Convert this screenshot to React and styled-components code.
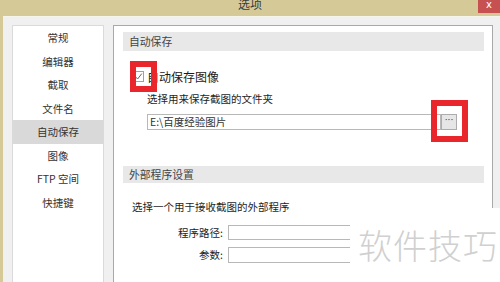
import React from "react";
import styled, { createGlobalStyle } from "styled-components";

const Global = createGlobalStyle`
  html, body { margin: 0; padding: 0; background: #f0f0f0; }
  body { font-family: "Noto Sans CJK SC", "Noto Sans", sans-serif; }
  * { box-sizing: border-box; }
`;

const Window = styled.div`
  position: relative;
  width: 500px;
  height: 282px;
  overflow: hidden;
  background: #f0f0f0;
  border-left: 3px solid #d6c998;
  display: flex;
  flex-direction: column;
  font-size: 10.5px;
  color: #222;
`;

const TitleBar = styled.div`
  height: 17px;
  margin-left: -3px;
  background: #d6c998;
  border-bottom: 1px solid #f7f4ea;
  display: flex;
  justify-content: center;
  position: relative;
`;

const TitleText = styled.div`
  font-size: 12px;
  line-height: 14px;
  margin-top: -3px;
  color: #3a3a3a;
`;

const CloseBtn = styled.div`
  position: absolute;
  right: 0;
  top: 0;
  width: 22px;
  height: 13px;
  background: #c75150;
  color: #fff;
  font-size: 10px;
  line-height: 9px;
  text-align: center;
  font-family: "DejaVu Sans", sans-serif;
`;

const Body = styled.div`
  flex: 1;
  display: flex;
  padding: 8px 7px 0 9px;
  gap: 9px;
`;

const NavPanel = styled.div`
  width: 92px;
  background: #fff;
  border: 1px solid #dadada;
  border-bottom: none;
  display: flex;
  flex-direction: column;
`;

const NavItem = styled.div`
  height: 23.5px;
  line-height: 23.5px;
  text-align: center;
  color: #333;
  background: ${(p) => (p.$active ? "#d9d9d9" : "transparent")};
`;

const MainPanel = styled.div`
  flex: 1;
  background: #fff;
  border: 1px solid #a9a9a9;
  border-bottom: none;
  padding: 0 8px 0 9px;
  display: flex;
  flex-direction: column;
`;

const SectionHeader = styled.div`
  margin-top: ${(p) => p.$mt}px;
  height: ${(p) => p.$h}px;
  line-height: ${(p) => p.$h}px;
  background: #e8e8e8;
  padding-left: 6px;
  color: #444;
  font-size: 10.8px;
`;

const CheckRow = styled.label`
  margin-top: 17px;
  height: 16px;
  padding-left: 10px;
  display: flex;
  align-items: center;
  gap: 3px;
  font-size: 12px;
  color: #1a1a1a;
`;

const CheckBox = styled.span`
  width: 11px;
  height: 11px;
  border: 1px solid #a0a0a0;
  background: #fff;
  display: flex;
  align-items: center;
  justify-content: center;
`;

const Text = styled.div`
  margin-top: ${(p) => p.$mt}px;
  padding-left: ${(p) => p.$pl}px;
  height: 14px;
  line-height: 14px;
  color: #1e1e1e;
`;

const PathRow = styled.div`
  margin-top: 8px;
  margin-left: 24px;
  display: flex;
  height: 16px;
  width: 310px;
`;

const PathInput = styled.div`
  flex: 1;
  border: 1px solid #b8b8b8;
  padding-left: 2px;
  line-height: 14px;
  font-size: 10.5px;
  color: #333;
`;

const DotsButton = styled.div`
  width: 16px;
  border: 1px solid #acacac;
  background: #e6e6e6;
  font-size: 9px;
  line-height: 10px;
  text-align: center;
  color: #333;
  font-family: "DejaVu Sans", sans-serif;
`;

const FormGrid = styled.div`
  margin-top: 11px;
  display: grid;
  grid-template-columns: 100px 1fr;
  column-gap: 5px;
  row-gap: 7px;
`;

const FieldLabel = styled.div`
  text-align: right;
  line-height: 15px;
  color: #222;
`;

const FieldInput = styled.div`
  height: ${(p) => p.$h}px;
  border: 1px solid #b8b8b8;
  border-right: none;
`;

const Highlight = styled.div`
  position: absolute;
  border: 6px solid #e8262b;
  left: ${(p) => p.$x}px;
  top: ${(p) => p.$y}px;
  width: ${(p) => p.$w}px;
  height: ${(p) => p.$h}px;
`;

const Watermark = styled.div`
  position: absolute;
  left: 347px;
  top: 208px;
  width: 153px;
  height: 74px;
  background: #fff;
  color: #d0d0d0;
  font-size: 34px;
  font-weight: 300;
  line-height: 74px;
  padding-left: 8px;
  letter-spacing: 1px;
  white-space: nowrap;
`;

const navItems = ["常规", "编辑器", "截取", "文件名", "自动保存", "图像", "FTP 空间", "快捷键"];

export default function App() {
  return (
    <>
      <Global />
      <Window>
        <TitleBar>
          <TitleText>选项</TitleText>
          <CloseBtn>x</CloseBtn>
        </TitleBar>
        <Body>
          <NavPanel>
            {navItems.map((n) => (
              <NavItem key={n} $active={n === "自动保存"}>
                {n}
              </NavItem>
            ))}
          </NavPanel>
          <MainPanel>
            <SectionHeader $mt={6} $h={19}>自动保存</SectionHeader>
            <CheckRow>
              <CheckBox>
                <svg width="9" height="9" viewBox="0 0 9 9">
                  <path d="M1.5 4.8 L3.6 7 L7.8 1.6" fill="none" stroke="#666" strokeWidth="1" />
                </svg>
              </CheckBox>
              自动保存图像
            </CheckRow>
            <Text $mt={8} $pl={24}>选择用来保存截图的文件夹</Text>
            <PathRow>
              <PathInput>E:\百度经验图片</PathInput>
              <DotsButton>···</DotsButton>
            </PathRow>
            <SectionHeader $mt={36} $h={17}>外部程序设置</SectionHeader>
            <Text $mt={17} $pl={9}>选择一个用于接收截图的外部程序</Text>
            <FormGrid>
              <FieldLabel>程序路径:</FieldLabel>
              <FieldInput $h={15} />
              <FieldLabel>参数:</FieldLabel>
              <FieldInput $h={16} />
            </FormGrid>
          </MainPanel>
        </Body>
        <Highlight $x={127} $y={61} $w={27} $h={31} />
        <Highlight $x={428} $y={100} $w={37} $h={42} />
        <Watermark>软件技巧</Watermark>
      </Window>
    </>
  );
}
